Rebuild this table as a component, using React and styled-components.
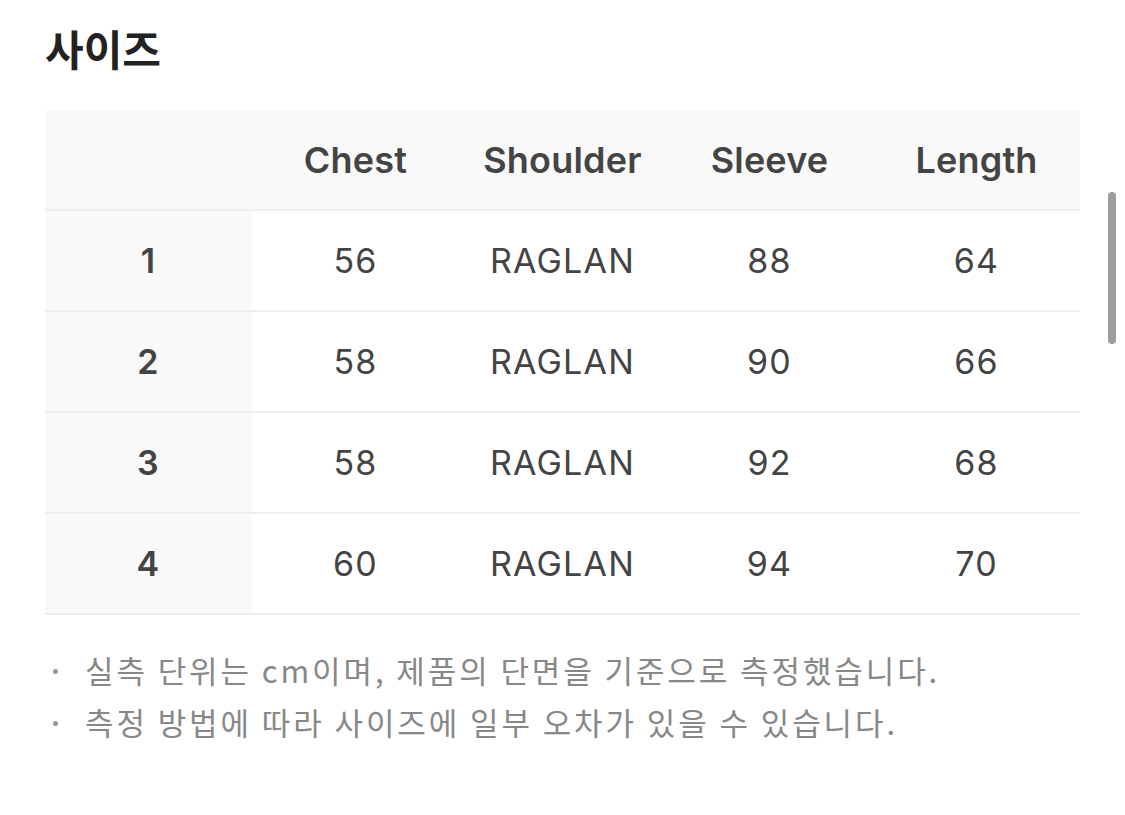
import React from "react";
import styled, { createGlobalStyle } from "styled-components";

const GlobalStyle = createGlobalStyle`
  html, body {
    margin: 0;
    padding: 0;
    background: #ffffff;
  }
  body {
    font-family: Inter, "Liberation Sans", "Noto Sans CJK KR", sans-serif;
    color: #444444;
  }
`;

const Page = styled.div`
  position: relative;
  width: 1125px;
  height: 815px;
  overflow: hidden;
  padding: 23px 45px 0 45px;
  box-sizing: border-box;
`;

const Title = styled.h2`
  margin: 0 0 37px 0;
  font-family: "Noto Sans CJK KR", sans-serif;
  font-size: 42px;
  font-weight: 600;
  line-height: 50px;
  color: #222222;
`;

const Table = styled.div`
  width: 1035px;
  display: grid;
  grid-template-columns: repeat(5, 207px);
`;

const Cell = styled.div`
  height: 101px;
  display: flex;
  align-items: center;
  justify-content: center;
  font-family: Inter, "Liberation Sans", sans-serif;
  font-size: ${(p) => (p.$head ? "36px" : "34px")};
  letter-spacing: ${(p) => (p.$head ? "0.2px" : "1.2px")};
  font-weight: ${(p) => (p.$bold ? 600 : 400)};
  color: #444444;
  background: ${(p) => (p.$shade ? "#f9f9f9" : "#ffffff")};
  border-bottom: 2px solid #eeeeee;
  box-sizing: border-box;
`;

const Notes = styled.ul`
  list-style: none;
  margin: 28px 0 0 0;
  padding: 0;
`;

const Note = styled.li`
  display: flex;
  align-items: center;
  height: 52px;
  font-family: "Noto Sans CJK KR", sans-serif;
  font-size: 31px;
  color: #888888;
  letter-spacing: 2.9px;
`;

const Dot = styled.span`
  flex: none;
  width: 5px;
  height: 5px;
  margin: 4px 27px 0 8px;
  border-radius: 50%;
  background: #999999;
`;

const ScrollThumb = styled.div`
  position: absolute;
  left: 1108px;
  top: 192px;
  width: 8px;
  height: 152px;
  border-radius: 4px;
  background: #9d9d9d;
`;

const headers = ["", "Chest", "Shoulder", "Sleeve", "Length"];
const rows = [
  ["1", "56", "RAGLAN", "88", "64"],
  ["2", "58", "RAGLAN", "90", "66"],
  ["3", "58", "RAGLAN", "92", "68"],
  ["4", "60", "RAGLAN", "94", "70"],
];

const notes = [
  "실측 단위는 cm이며, 제품의 단면을 기준으로 측정했습니다.",
  "측정 방법에 따라 사이즈에 일부 오차가 있을 수 있습니다.",
];

export default function App() {
  return (
    <>
      <GlobalStyle />
      <Page>
        <Title>사이즈</Title>
        <Table>
          {headers.map((h, i) => (
            <Cell key={"h" + i} $head $bold $shade>
              {h}
            </Cell>
          ))}
          {rows.map((row) =>
            row.map((v, i) => (
              <Cell key={row[0] + "-" + i} $bold={i === 0} $shade={i === 0}>
                {v}
              </Cell>
            ))
          )}
        </Table>
        <Notes>
          {notes.map((n) => (
            <Note key={n}>
              <Dot />
              {n}
            </Note>
          ))}
        </Notes>
        <ScrollThumb />
      </Page>
    </>
  );
}
